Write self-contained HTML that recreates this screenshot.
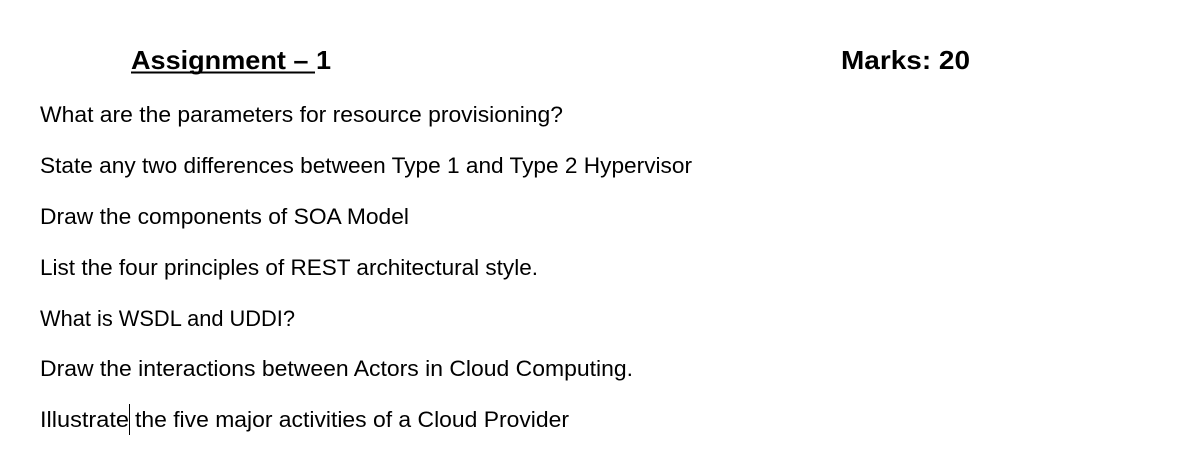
<!DOCTYPE html>
<html><head><meta charset="utf-8"><style>
html,body{margin:0;padding:0;background:#fff;width:1180px;height:453px;overflow:hidden}
svg text{font-family:"Liberation Sans",sans-serif;fill:#000}
</style></head><body>
<svg width="1180" height="453" xmlns="http://www.w3.org/2000/svg">
<text x="131" y="69" font-size="26" font-weight="bold" textLength="200" lengthAdjust="spacingAndGlyphs">Assignment – 1</text>
<rect x="131" y="71.5" width="184" height="2" fill="#000"/>
<text x="841" y="69" font-size="26" font-weight="bold" textLength="129" lengthAdjust="spacingAndGlyphs">Marks: 20</text>
<g font-size="22">
<text x="40" y="122" textLength="523" lengthAdjust="spacingAndGlyphs">What are the parameters for resource provisioning?</text>
<text x="40" y="173" textLength="652" lengthAdjust="spacingAndGlyphs">State any two differences between Type 1 and Type 2 Hypervisor</text>
<text x="40" y="224" textLength="369" lengthAdjust="spacingAndGlyphs">Draw the components of SOA Model</text>
<text x="40" y="275" textLength="498" lengthAdjust="spacingAndGlyphs">List the four principles of REST architectural style.</text>
<text x="40" y="326" textLength="255" lengthAdjust="spacingAndGlyphs">What is WSDL and UDDI?</text>
<text x="40" y="376" textLength="593" lengthAdjust="spacingAndGlyphs">Draw the interactions between Actors in Cloud Computing.</text>
<text x="40" y="427" textLength="89" lengthAdjust="spacingAndGlyphs">Illustrate</text>
<text x="135" y="427" textLength="434" lengthAdjust="spacingAndGlyphs">the five major activities of a Cloud Provider</text>
</g>
<rect x="129" y="404" width="1" height="31" fill="#000"/>
</svg>
</body></html>
